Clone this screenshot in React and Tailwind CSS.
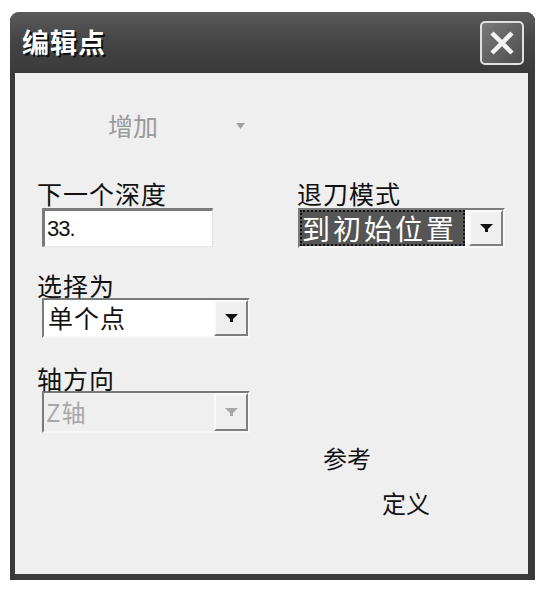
import React from 'react'

const cjk = "font-['Noto_Sans_CJK_SC','Liberation_Sans',sans-serif]"

const Arrow = ({ color = '#111' }) => (
    <svg width="13" height="8" viewBox="0 0 13 8">
        <path d="M0 0h13L8 5v3H5V5z" fill={color} />
    </svg>
)

const DropButton = ({ disabled }) => (
    <div className="w-[34px] h-full flex items-center justify-center bg-[#efefef] border-2 border-t-[#fafafa] border-l-[#fafafa] border-r-[#7e7e7e] border-b-[#7e7e7e]">
        <Arrow color={disabled ? '#a8a8a8' : '#111'} />
    </div>
)

const Label = ({ children }) => (
    <div className={`${cjk} text-[25px] leading-[28px] text-[#111] tracking-[1px]`}>{children}</div>
)

const EditPoint = () => {
    return (
        <div className="w-[550px] h-[604px] bg-white pt-[12px] pl-[10px]">
            {/* window */}
            <div className="w-[525px] h-[568px] bg-[#3a3a3a] rounded-t-[9px] flex flex-col">
                {/* title bar */}
                <div className="h-[61px] flex items-center justify-between pl-[12px] pr-[11px] rounded-t-[9px] bg-gradient-to-b from-[#5a5a5a] via-[#444] to-[#3a3a3a]">
                    <span className={`${cjk} text-[27px] font-bold text-white [text-shadow:2px_2px_0_#111] tracking-[1px]`}>编辑点</span>
                    <div className="w-[44px] h-[44px] rounded-[5px] border-2 border-[#e0e0e0] bg-gradient-to-br from-[#7a7a7a] to-[#4e4e4e] flex items-center justify-center">
                        <svg width="28" height="28" viewBox="0 0 28 28">
                            <path d="M4 4L24 24M24 4L4 24" stroke="#f4f4f4" strokeWidth="4.5" />
                        </svg>
                    </div>
                </div>

                {/* body */}
                <div className="flex-1 ml-[5px] mr-[7px] mb-[6px] bg-[#efefef] pl-[22px]">
                    <div className="mt-[38px] flex items-center">
                        <span className={`${cjk} ml-[71px] text-[25px] leading-[28px] text-[#9a9a9a]`}>增加</span>
                        <span className="ml-[78px] mt-[2px]">
                            <svg width="9" height="6" viewBox="0 0 9 6"><path d="M0 0h9L4.5 6z" fill="#a0a0a0" /></svg>
                        </span>
                    </div>

                    <div className="mt-[40px] grid grid-cols-[260px_1fr]">
                        <div>
                            <Label>下一个深度</Label>
                            <div className="mt-[1px] ml-[5px] w-[171px] h-[39px] bg-white border-t-[3px] border-l-[3px] border-b border-r border-t-[#7a7a7a] border-l-[#7a7a7a] border-b-[#e4e4e4] border-r-[#e4e4e4] flex items-center pl-[2px]">
                                <span className="font-['Liberation_Sans',sans-serif] text-[22px] text-[#111] tracking-[-1px]">33.</span>
                            </div>
                        </div>
                        <div>
                            <Label>退刀模式</Label>
                            <div className="mt-[1px] ml-[1px] w-[207px] h-[40px] bg-white border-2 border-t-[#7a7a7a] border-l-[#7a7a7a] border-b-[#f6f6f6] border-r-[#f6f6f6] flex items-stretch">
                                <div className="w-[165px] bg-[#555] border-2 border-dotted border-[#111] flex items-center">
                                    <span className={`${cjk} text-[28px] leading-none text-white tracking-[3px]`}>到初始位置</span>
                                </div>
                                <div className="flex-1" />
                                <DropButton />
                            </div>
                        </div>
                    </div>

                    <div className="mt-[23px]">
                        <Label>选择为</Label>
                        <div className="mt-[-1px] ml-[5px] w-[208px] h-[40px] bg-white border-2 border-t-[#7a7a7a] border-l-[#7a7a7a] border-b-[#f6f6f6] border-r-[#f6f6f6] flex items-stretch">
                            <span className={`${cjk} flex-1 flex items-center pl-[4px] text-[25px] text-[#111] tracking-[1px]`}>单个点</span>
                            <DropButton />
                        </div>
                    </div>

                    <div className="mt-[26px]">
                        <Label>轴方向</Label>
                        <div className="mt-[-1px] ml-[5px] w-[208px] h-[42px] bg-[#efefef] border-2 border-t-[#7a7a7a] border-l-[#7a7a7a] border-b-[#f6f6f6] border-r-[#f6f6f6] flex items-stretch">
                            <span className={`${cjk} flex-1 flex items-center pl-[2px] text-[24px] text-[#a8a8a8] tracking-[1px]`}>Z轴</span>
                            <DropButton disabled />
                        </div>
                    </div>

                    <div className={`${cjk} mt-[11px] ml-[286px] text-[24px] leading-[28px] text-[#111]`}>参考</div>
                    <div className={`${cjk} mt-[17px] ml-[345px] text-[24px] leading-[28px] text-[#111]`}>定义</div>
                </div>
            </div>
        </div>
    )
}

export default EditPoint
